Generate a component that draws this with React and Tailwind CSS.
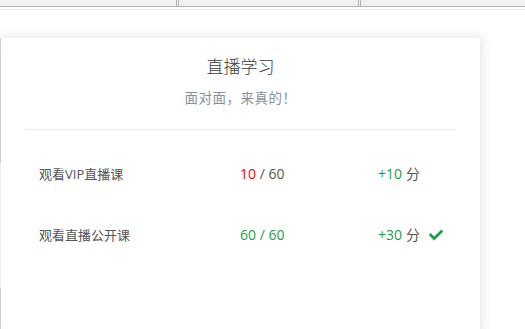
import { FaCheck } from "react-icons/fa";

const rows = [
  { label: "观看VIP直播课", done: 10, total: 60, points: 10, finished: false },
  { label: "观看直播公开课", done: 60, total: 60, points: 30, finished: true },
];

export default function App() {
  return (
    <div
      className="w-[525px] h-[329px] overflow-hidden bg-white"
      style={{ fontFamily: '"Open Sans", "Noto Sans CJK SC", sans-serif' }}
    >
      {/* table header strip */}
      <div className="flex h-[7px] bg-[#f0f0f0] border-b border-[#b4b4b4]">
        <div className="w-[177px] border-r border-[#b4b4b4]" />
        <div className="w-[181px] border-x border-[#b4b4b4] ml-px" />
        <div className="flex-1 border-l border-[#b4b4b4] ml-px" />
      </div>
      <div className="h-px mt-[2px] bg-[#e6e6e6]" />

      <div className="flex mt-[28px]">
        {/* faint border of the panel behind */}
        <div className="w-px flex flex-col">
          <div className="h-[125px] bg-[#dcdcdc]" />
          <div className="h-[125px]" />
          <div className="flex-1 bg-[#dcdcdc]" />
        </div>

        {/* card */}
        <div className="w-[479px] h-[300px] bg-white shadow-[0_0_12px_rgba(0,0,0,0.14)]">
          <div className="pt-[17px] text-center">
            <h3 className="text-[17px] leading-[24px] font-light text-[#3a3a3a]">直播学习</h3>
            <p className="mt-[10px] text-[13.5px] leading-[18px] tracking-[0.5px] text-[#85909c]">面对面，来真的！</p>
          </div>
          <div className="mx-[24px] mt-[22px] h-px bg-[#e8e8e8]" />

          <div className="mt-[13px]">
            {rows.map((r) => (
              <div key={r.label} className="flex items-center h-[61px] leading-[20px] pl-[38px]">
                <div className="w-[201px] text-[13px] text-[#555]">{r.label}</div>
                <div className="w-[138px] text-[14px]">
                  {r.finished ? (
                    <span className="text-[#1a9e4a]">{r.done} / {r.total}</span>
                  ) : (
                    <>
                      <span className="text-[#ff0000]">{r.done}</span>
                      <span className="text-[#555]"> / {r.total}</span>
                    </>
                  )}
                </div>
                <div className="flex items-center text-[14px]">
                  <span className="text-[#1a9e4a]">+{r.points}</span>
                  <span className="ml-[4px] text-[#555]">分</span>
                  {r.finished && <FaCheck className="ml-[9px] text-[#1a9e4a]" size={14} />}
                </div>
              </div>
            ))}
          </div>
        </div>
      </div>
    </div>
  );
}
